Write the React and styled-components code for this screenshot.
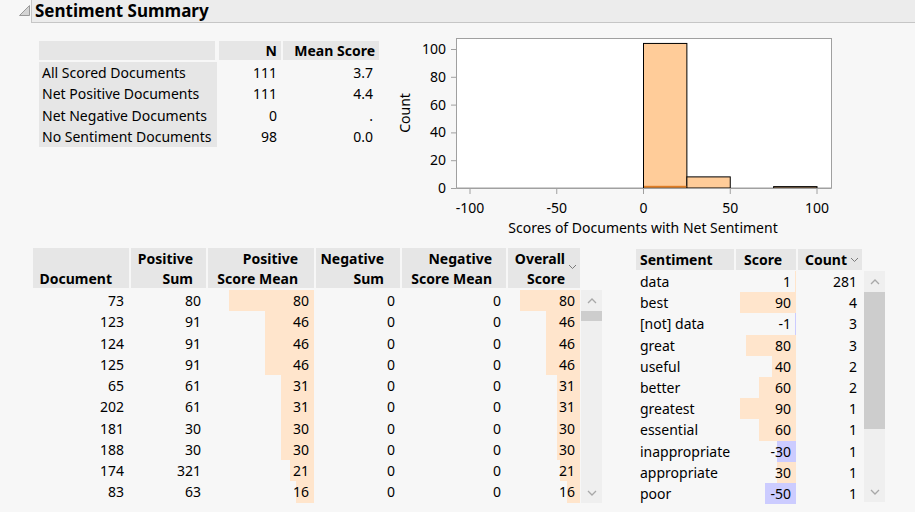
import * as React from "react";
import styled, { createGlobalStyle } from "styled-components";

const GlobalStyle = createGlobalStyle`
  html, body {
    margin: 0;
    padding: 0;
    background: #f7f7f7;
  }
  body {
    font-family: "Segoe UI", "Noto Sans", "Liberation Sans", sans-serif;
    font-size: 14px;
    color: #000;
  }
`;

const summaryRows = [
  { label: "All Scored Documents", n: "111", mean: "3.7" },
  { label: "Net Positive Documents", n: "111", mean: "4.4" },
  { label: "Net Negative Documents", n: "0", mean: "." },
  { label: "No Sentiment Documents", n: "98", mean: "0.0" },
];

const docColumns = [
  { title: ["", "Document"], width: 96, hpad: 17 },
  { title: ["Positive", "Sum"], width: 75, hpad: 13 },
  { title: ["Positive", "Score Mean"], width: 106, hpad: 16 },
  { title: ["Negative", "Sum"], width: 84, hpad: 16 },
  { title: ["Negative", "Score Mean"], width: 104, hpad: 14 },
  { title: ["Overall", "Score"], width: 72, hpad: 15, sorted: true },
];

// [doc, posSum, posMean, negSum, negMean, overall], then bar widths
const docRows = [
  { v: [73, 80, 80, 0, 0, 80], bars: [85, 60] },
  { v: [123, 91, 46, 0, 0, 46], bars: [49, 34] },
  { v: [124, 91, 46, 0, 0, 46], bars: [49, 34] },
  { v: [125, 91, 46, 0, 0, 46], bars: [49, 34] },
  { v: [65, 61, 31, 0, 0, 31], bars: [33, 23] },
  { v: [202, 61, 31, 0, 0, 31], bars: [33, 23] },
  { v: [181, 30, 30, 0, 0, 30], bars: [33, 23] },
  { v: [188, 30, 30, 0, 0, 30], bars: [33, 23] },
  { v: [174, 321, 21, 0, 0, 21], bars: [24, 20] },
  { v: [83, 63, 16, 0, 0, 16], bars: [18, 13] },
];

const sentiments = [
  { term: "data", score: 1, count: 281, bar: 1 },
  { term: "best", score: 90, count: 4, bar: 56 },
  { term: "[not] data", score: -1, count: 3, bar: 1 },
  { term: "great", score: 80, count: 3, bar: 50 },
  { term: "useful", score: 40, count: 2, bar: 24 },
  { term: "better", score: 60, count: 2, bar: 37 },
  { term: "greatest", score: 90, count: 1, bar: 56 },
  { term: "essential", score: 60, count: 1, bar: 37 },
  { term: "inappropriate", score: -30, count: 1, bar: 19 },
  { term: "appropriate", score: 30, count: 1, bar: 19 },
  { term: "poor", score: -50, count: 1, bar: 31 },
];

function Chevron({ up }) {
  return (
    <svg width="10" height="6" viewBox="0 0 10 6">
      <polyline
        points={up ? "1,5 5,1 9,5" : "1,1 5,5 9,1"}
        fill="none"
        stroke="#a8a8a8"
        strokeWidth="1.3"
      />
    </svg>
  );
}

function SortMark() {
  return (
    <SortIcon width="9" height="6" viewBox="0 0 9 6">
      <polyline points="1,1 4.5,4.5 8,1" fill="none" stroke="#7a7a7a" strokeWidth="1" />
    </SortIcon>
  );
}

function Histogram() {
  const x = (v) => 248.5 + v * 1.735;
  const y = (c) => 153 - c * 1.39;
  const bins = [
    { from: 0, to: 25, c: 104 },
    { from: 25, to: 50, c: 8 },
    { from: 75, to: 100, c: 1 },
  ];
  return (
    <ChartSvg width="445" height="205" viewBox="0 0 445 205">
      <rect x="61.5" y="3.5" width="375" height="149.5" fill="#fff" stroke="#a0a0a0" />
      {bins.map((b) => (
        <rect
          key={b.from}
          x={x(b.from)}
          y={y(b.c)}
          width={x(b.to) - x(b.from)}
          height={153 - y(b.c)}
          fill="#ffcc99"
          stroke="#000"
          strokeWidth="1"
        />
      ))}
      <rect x={x(0) + 0.5} y="150.8" width={x(25) - x(0) - 1} height="1.7" fill="#e07d24" />
      <line x1="61.5" y1="153.5" x2="436.5" y2="153.5" stroke="#a0a0a0" />
      {[0, 20, 40, 60, 80, 100].map((c) => (
        <g key={c}>
          <line x1="56" x2="61.5" y1={y(c) + 0.5} y2={y(c) + 0.5} stroke="#a0a0a0" />
          <text x="51" y={y(c) + 5} textAnchor="end" fontSize="14">
            {c}
          </text>
        </g>
      ))}
      {[-100, -50, 0, 50, 100].map((v) => (
        <g key={v}>
          <line x1={x(v)} x2={x(v)} y1="153.5" y2="159" stroke="#a0a0a0" />
          <text x={x(v)} y="178" textAnchor="middle" fontSize="14">
            {v}
          </text>
        </g>
      ))}
      <text x="15" y="78" textAnchor="middle" fontSize="14" transform="rotate(-90 15 78)">
        Count
      </text>
      <text x="248" y="198" textAnchor="middle" fontSize="14">
        Scores of Documents with Net Sentiment
      </text>
    </ChartSvg>
  );
}

export default function App() {
  return (
    <>
      <GlobalStyle />
      <Page>
        <OutlineHeader>
          <Disclosure width="14" height="14" viewBox="0 0 14 14">
            <polygon points="12.5,1.5 12.5,11.5 2.5,11.5" fill="#d4d4d4" stroke="#9a9a9a" strokeWidth="1" />
          </Disclosure>
          <TitleBar>Sentiment Summary</TitleBar>
        </OutlineHeader>

        <TopSection>
          <SummaryGrid>
            <SumHead />
            <SumHead $num>N</SumHead>
            <SumHead $num>Mean Score</SumHead>
            {summaryRows.map((r) => (
              <React.Fragment key={r.label}>
                <SumLabel>{r.label}</SumLabel>
                <SumCell>{r.n}</SumCell>
                <SumCell $last>{r.mean}</SumCell>
              </React.Fragment>
            ))}
          </SummaryGrid>
          <Histogram />
        </TopSection>

        <BottomSection>
          <DocBlock>
            <DocHeadRow>
              {docColumns.map((c, i) => (
                <DocHead key={i} $w={c.width} $pad={c.hpad}>
                  <span>{c.title[0] || "\u00a0"}</span>
                  <span>{c.title[1]}</span>
                  {c.sorted && <SortMark />}
                </DocHead>
              ))}
            </DocHeadRow>
            <BodyWrap>
              <div>
                {docRows.map((r, ri) => (
                  <DocRow key={ri}>
                    {r.v.map((val, ci) => (
                      <DocCell key={ci} $w={docColumns[ci].width}>
                        {ci === 2 && <Bar style={{ width: r.bars[0] }} />}
                        {ci === 5 && <Bar style={{ width: r.bars[1] }} />}
                        <CellText>{val}</CellText>
                      </DocCell>
                    ))}
                  </DocRow>
                ))}
              </div>
              <ScrollTrack $h={213}>
                <ScrollArrow>
                  <Chevron up />
                </ScrollArrow>
                <Thumb $top={0} $h={10} />
                <ScrollSpacer />
                <ScrollArrow>
                  <Chevron />
                </ScrollArrow>
              </ScrollTrack>
            </BodyWrap>
          </DocBlock>

          <SentBlock>
            <SentHeadRow>
              <SentHead $w={98} $left>
                Sentiment
              </SentHead>
              <SentHead $w={60} $pad={14}>
                Score
              </SentHead>
              <SentHead $w={64} $pad={15}>
                Count
                <SortMark />
              </SentHead>
            </SentHeadRow>
            <BodyWrap>
              <div>
                {sentiments.map((s) => (
                  <SentRow key={s.term}>
                    <SentCell $w={98} $left>
                      {s.term}
                    </SentCell>
                    <SentCell $w={60}>
                      <Bar $neg={s.score < 0} style={{ width: s.bar }} />
                      <CellText>{s.score}</CellText>
                    </SentCell>
                    <SentCell $w={64}>{s.count}</SentCell>
                  </SentRow>
                ))}
              </div>
              <ScrollTrack $h={231} $gap={2}>
                <ScrollArrow>
                  <Chevron up />
                </ScrollArrow>
                <Thumb $h={137} />
                <ScrollSpacer />
                <ScrollArrow>
                  <Chevron />
                </ScrollArrow>
              </ScrollTrack>
            </BodyWrap>
          </SentBlock>
        </BottomSection>
      </Page>
    </>
  );
}

const Page = styled.div`
  width: 915px;
  height: 512px;
  overflow: hidden;
  display: flex;
  flex-direction: column;
`;

const OutlineHeader = styled.div`
  display: flex;
  align-items: flex-start;
  height: 24px;
`;

const Disclosure = styled.svg`
  margin: 4px 0 0 17px;
  flex: none;
`;

const TitleBar = styled.div`
  flex: 1;
  height: 23px;
  box-sizing: border-box;
  background: #ececec;
  border-left: 1px solid #c6c6c6;
  border-bottom: 1px solid #c6c6c6;
  padding-left: 3px;
  font-size: 17px;
  font-weight: 700;
  line-height: 22px;
`;

const TopSection = styled.div`
  display: flex;
  align-items: flex-start;
  padding: 11px 0 0 39px;
`;

const SummaryGrid = styled.div`
  display: grid;
  grid-template-columns: 178px 64px 98px;
  grid-template-rows: 21px repeat(4, 21.25px);
  margin-top: 6px;
`;

const SumHead = styled.div`
  background: #e6e6e6;
  border-right: ${(p) => (p.$num ? "0" : "2px")} solid #f7f7f7;
  border-left: ${(p) => (p.$num ? "2px" : "0")} solid #f7f7f7;
  border-bottom: 2px solid #f7f7f7;
  font-weight: 700;
  text-align: right;
  padding-right: 4px;
  line-height: 19px;
`;

const SumLabel = styled.div`
  background: #e6e6e6;
  padding-left: 3px;
  line-height: 21.25px;
  white-space: nowrap;
`;

const SumCell = styled.div`
  text-align: right;
  padding-right: ${(p) => (p.$last ? "6px" : "4px")};
  line-height: 21.25px;
`;

const ChartSvg = styled.svg`
  margin-left: 16px;
  flex: none;
  font-family: "Segoe UI", "Noto Sans", "Liberation Sans", sans-serif;
`;

const BottomSection = styled.div`
  display: flex;
  align-items: flex-start;
  padding: 8px 0 0 33px;
`;

const DocBlock = styled.div`
  display: flex;
  flex-direction: column;
`;

const DocHeadRow = styled.div`
  display: flex;
  gap: 2px;
  height: 40px;
  margin-bottom: 2px;
`;

const DocHead = styled.div`
  position: relative;
  width: ${(p) => p.$w}px;
  box-sizing: border-box;
  background: #e6e6e6;
  padding-right: ${(p) => p.$pad}px;
  display: flex;
  flex-direction: column;
  align-items: flex-end;
  justify-content: flex-end;
  font-weight: 700;
  line-height: 19.5px;
  white-space: nowrap;
`;

const SortIcon = styled.svg`
  position: absolute;
  right: 3px;
  top: 16px;
`;

const BodyWrap = styled.div`
  display: flex;
  align-items: flex-start;
`;

const DocRow = styled.div`
  display: flex;
  gap: 2px;
  height: 21.25px;
`;

const DocCell = styled.div`
  position: relative;
  width: ${(p) => p.$w}px;
  box-sizing: border-box;
  padding-right: 5px;
  text-align: right;
  line-height: 21.25px;
`;

const Bar = styled.div`
  position: absolute;
  top: 0;
  bottom: 0;
  right: 0;
  background: ${(p) => (p.$neg ? "#ccccff" : "#ffe5cc")};
`;

const CellText = styled.span`
  position: relative;
`;

const ScrollTrack = styled.div`
  margin-left: ${(p) => p.$gap || 1}px;
  width: 21px;
  height: ${(p) => p.$h}px;
  background: #efefef;
  display: flex;
  flex-direction: column;
`;

const ScrollArrow = styled.div`
  height: 21px;
  display: flex;
  align-items: center;
  justify-content: center;
  flex: none;
`;

const Thumb = styled.div`
  height: ${(p) => p.$h}px;
  background: #cdcdcd;
  flex: none;
`;

const ScrollSpacer = styled.div`
  flex: 1;
`;

const SentBlock = styled.div`
  display: flex;
  flex-direction: column;
  margin: 1px 0 0 34px;
`;

const SentHeadRow = styled.div`
  display: flex;
  gap: 2px;
  height: 21px;
  margin-bottom: 1px;
`;

const SentHead = styled.div`
  position: relative;
  width: ${(p) => p.$w}px;
  box-sizing: border-box;
  background: #e6e6e6;
  font-weight: 700;
  line-height: 21px;
  text-align: ${(p) => (p.$left ? "left" : "right")};
  padding: ${(p) => (p.$left ? "0 0 0 4px" : `0 ${p.$pad}px 0 0`)};
  white-space: nowrap;

  ${SortIcon} {
    top: 8px;
    right: 3px;
  }
`;

const SentRow = styled.div`
  display: flex;
  gap: 2px;
  height: 21.2px;
`;

const SentCell = styled.div`
  position: relative;
  width: ${(p) => p.$w}px;
  box-sizing: border-box;
  line-height: 21.2px;
  text-align: ${(p) => (p.$left ? "left" : "right")};
  padding: ${(p) => (p.$left ? "0 0 0 4px" : "0 5px 0 0")};
  white-space: nowrap;
`;
